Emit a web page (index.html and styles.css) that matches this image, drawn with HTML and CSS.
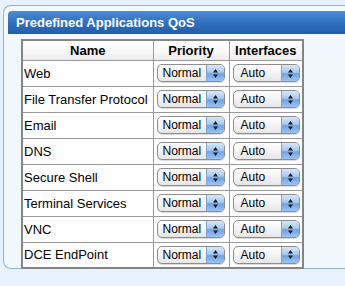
FILE: index.html
```html
<!DOCTYPE html>
<html lang="en">
<head>
    <meta charset="UTF-8">
    <title>Predefined Applications QoS</title>
    <link rel="stylesheet" href="styles.css">
</head>
<body>
    <div class="panel">
        <div class="panel-title">Predefined Applications QoS</div>

        <table class="qos-table">
            <thead>
                <tr>
                    <th class="col-name">Name</th>
                    <th class="col-priority">Priority</th>
                    <th class="col-iface">Interfaces</th>
                </tr>
            </thead>
            <tbody>
                <tr>
                    <td>Web</td>
                    <td><span class="select select-priority"><span class="select-value">Normal</span><span class="select-arrows"><svg width="7" height="11" viewBox="0 0 7 11"><path d="M3.5 1 L6 4.5 L1 4.5 Z M3.5 10 L6 6.5 L1 6.5 Z"/></svg></span></span></td>
                    <td><span class="select select-iface"><span class="select-value">Auto</span><span class="select-arrows"><svg width="7" height="11" viewBox="0 0 7 11"><path d="M3.5 1 L6 4.5 L1 4.5 Z M3.5 10 L6 6.5 L1 6.5 Z"/></svg></span></span></td>
                </tr>
                <tr>
                    <td>File Transfer Protocol</td>
                    <td><span class="select select-priority"><span class="select-value">Normal</span><span class="select-arrows"><svg width="7" height="11" viewBox="0 0 7 11"><path d="M3.5 1 L6 4.5 L1 4.5 Z M3.5 10 L6 6.5 L1 6.5 Z"/></svg></span></span></td>
                    <td><span class="select select-iface"><span class="select-value">Auto</span><span class="select-arrows"><svg width="7" height="11" viewBox="0 0 7 11"><path d="M3.5 1 L6 4.5 L1 4.5 Z M3.5 10 L6 6.5 L1 6.5 Z"/></svg></span></span></td>
                </tr>
                <tr>
                    <td>Email</td>
                    <td><span class="select select-priority"><span class="select-value">Normal</span><span class="select-arrows"><svg width="7" height="11" viewBox="0 0 7 11"><path d="M3.5 1 L6 4.5 L1 4.5 Z M3.5 10 L6 6.5 L1 6.5 Z"/></svg></span></span></td>
                    <td><span class="select select-iface"><span class="select-value">Auto</span><span class="select-arrows"><svg width="7" height="11" viewBox="0 0 7 11"><path d="M3.5 1 L6 4.5 L1 4.5 Z M3.5 10 L6 6.5 L1 6.5 Z"/></svg></span></span></td>
                </tr>
                <tr>
                    <td>DNS</td>
                    <td><span class="select select-priority"><span class="select-value">Normal</span><span class="select-arrows"><svg width="7" height="11" viewBox="0 0 7 11"><path d="M3.5 1 L6 4.5 L1 4.5 Z M3.5 10 L6 6.5 L1 6.5 Z"/></svg></span></span></td>
                    <td><span class="select select-iface"><span class="select-value">Auto</span><span class="select-arrows"><svg width="7" height="11" viewBox="0 0 7 11"><path d="M3.5 1 L6 4.5 L1 4.5 Z M3.5 10 L6 6.5 L1 6.5 Z"/></svg></span></span></td>
                </tr>
                <tr>
                    <td>Secure Shell</td>
                    <td><span class="select select-priority"><span class="select-value">Normal</span><span class="select-arrows"><svg width="7" height="11" viewBox="0 0 7 11"><path d="M3.5 1 L6 4.5 L1 4.5 Z M3.5 10 L6 6.5 L1 6.5 Z"/></svg></span></span></td>
                    <td><span class="select select-iface"><span class="select-value">Auto</span><span class="select-arrows"><svg width="7" height="11" viewBox="0 0 7 11"><path d="M3.5 1 L6 4.5 L1 4.5 Z M3.5 10 L6 6.5 L1 6.5 Z"/></svg></span></span></td>
                </tr>
                <tr>
                    <td>Terminal Services</td>
                    <td><span class="select select-priority"><span class="select-value">Normal</span><span class="select-arrows"><svg width="7" height="11" viewBox="0 0 7 11"><path d="M3.5 1 L6 4.5 L1 4.5 Z M3.5 10 L6 6.5 L1 6.5 Z"/></svg></span></span></td>
                    <td><span class="select select-iface"><span class="select-value">Auto</span><span class="select-arrows"><svg width="7" height="11" viewBox="0 0 7 11"><path d="M3.5 1 L6 4.5 L1 4.5 Z M3.5 10 L6 6.5 L1 6.5 Z"/></svg></span></span></td>
                </tr>
                <tr>
                    <td>VNC</td>
                    <td><span class="select select-priority"><span class="select-value">Normal</span><span class="select-arrows"><svg width="7" height="11" viewBox="0 0 7 11"><path d="M3.5 1 L6 4.5 L1 4.5 Z M3.5 10 L6 6.5 L1 6.5 Z"/></svg></span></span></td>
                    <td><span class="select select-iface"><span class="select-value">Auto</span><span class="select-arrows"><svg width="7" height="11" viewBox="0 0 7 11"><path d="M3.5 1 L6 4.5 L1 4.5 Z M3.5 10 L6 6.5 L1 6.5 Z"/></svg></span></span></td>
                </tr>
                <tr>
                    <td>DCE EndPoint</td>
                    <td><span class="select select-priority"><span class="select-value">Normal</span><span class="select-arrows"><svg width="7" height="11" viewBox="0 0 7 11"><path d="M3.5 1 L6 4.5 L1 4.5 Z M3.5 10 L6 6.5 L1 6.5 Z"/></svg></span></span></td>
                    <td><span class="select select-iface"><span class="select-value">Auto</span><span class="select-arrows"><svg width="7" height="11" viewBox="0 0 7 11"><path d="M3.5 1 L6 4.5 L1 4.5 Z M3.5 10 L6 6.5 L1 6.5 Z"/></svg></span></span></td>
                </tr>
            </tbody>
        </table>
    </div>
</body>
</html>
```

FILE: styles.css
```css
* {
    margin: 0;
    padding: 0;
    box-sizing: border-box;
}

body {
    font-family: 'Liberation Sans', Arial, sans-serif;
    font-size: 13px;
    color: #000;
    background: #e7f3fc;
    overflow: hidden;
}

.panel {
    margin: 5px 0 0 3px;
    padding: 5px 0 3px 0;
    background: #f2f9fe;
    border: 1px solid #93b4cb;
    border-right: none;
    border-radius: 8px 0 0 8px;
}

.panel-title {
    margin-left: 4px;
    height: 23px;
    line-height: 23px;
    padding-left: 8px;
    color: white;
    font-weight: bold;
    font-size: 13px;
    background: linear-gradient(to bottom, #4a8dd6 0%, #3070bf 50%, #215ea8 100%);
    border-radius: 4px 0 0 0;
}

.qos-table {
    margin: 5px 0 -4px 17px;
    border-collapse: collapse;
    border: 2px solid #858585;
    background: white;
}

.qos-table th,
.qos-table td {
    border: 1px solid #9a9a9a;
    height: 26px;
    white-space: nowrap;
}

.qos-table th {
    height: 20px;
    font-weight: bold;
    text-align: center;
    background: linear-gradient(to bottom, #ffffff 0%, #f7f7f7 60%, #ececec 100%);
}

.qos-table td {
    padding: 0 0 0 1px;
}

.col-name {
    width: 131px;
}

.col-priority {
    width: 76px;
}

.col-iface {
    width: 74px;
}

.select {
    display: flex;
    height: 18px;
    margin-left: 2px;
    border: 1px solid #8d8d8d;
    border-radius: 5px;
    overflow: hidden;
    background: linear-gradient(to bottom, #ffffff 0%, #f4f4f4 50%, #e6e6e6 100%);
    box-shadow: 0 1px 1px rgba(0,0,0,0.15);
    font-size: 12px;
}

.select-priority {
    width: 68px;
}

.select-iface {
    width: 67px;
}

.select-value {
    flex: 1;
    padding-left: 5px;
    line-height: 16px;
}

.select-iface .select-value {
    padding-left: 7px;
}

.select-arrows {
    width: 18px;
    display: flex;
    align-items: center;
    justify-content: center;
    border-left: 1px solid #7fa2cf;
    background: linear-gradient(to bottom, #d7e7f9 0%, #a9c9f0 45%, #6fa3e6 55%, #9cc3f3 100%);
}

.select-arrows svg {
    fill: #1a1a1a;
}
```
